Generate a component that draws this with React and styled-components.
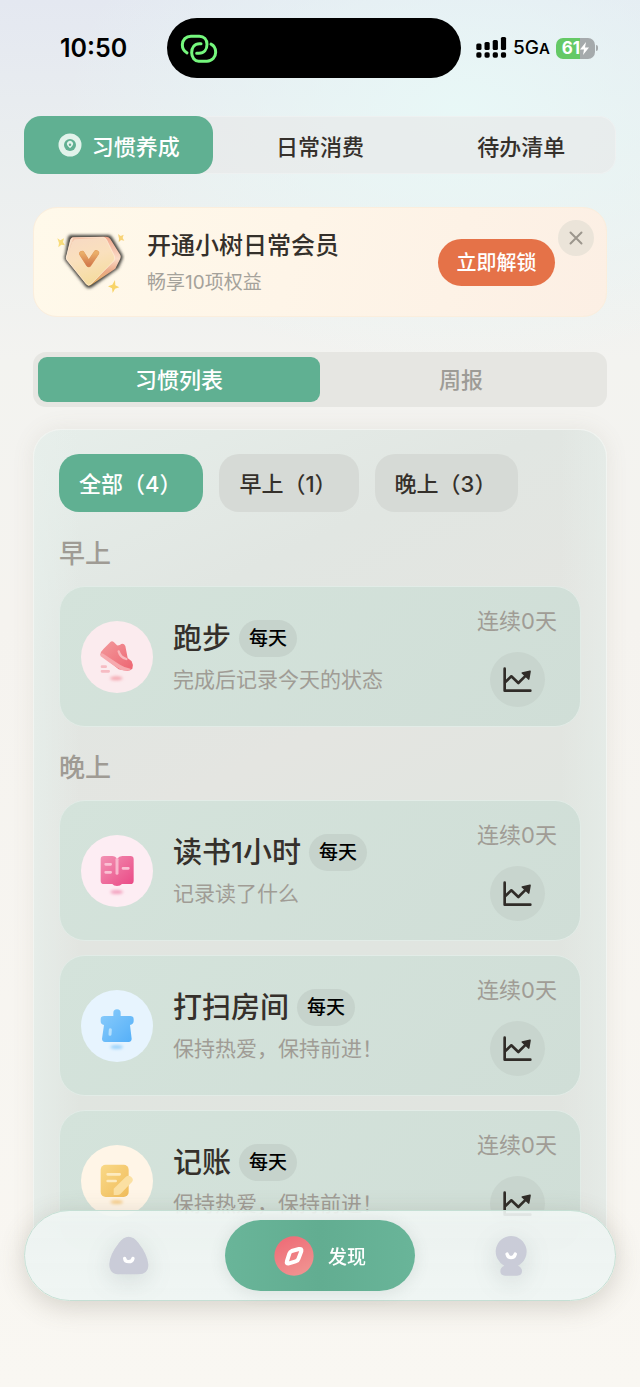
import React, { useState } from 'react';
import styled, { createGlobalStyle, css } from 'styled-components';

const GlobalStyle = createGlobalStyle`
  * {
    box-sizing: border-box;
  }

  body {
    margin: 0;
    font-family: Inter, "Noto Sans CJK SC", sans-serif;
    color: #35302b;
  }

  button {
    margin: 0;
    padding: 0;
    border: 0;
    background: none;
    color: inherit;
    font: inherit;
    cursor: pointer;
  }

  h2, h3, p {
    margin: 0;
    font-weight: 500;
  }

  svg {
    display: block;
    flex: none;
  }
`;

const Screen = styled.div`
  display: flex;
  flex-direction: column;
  height: 100vh;
  padding-bottom: 130px;
  background:
    radial-gradient(ellipse 400px 260px at 72% 110px, rgba(232, 248, 247, 0.95), rgba(232, 248, 247, 0)),
    linear-gradient(180deg, #e4e8f1 0, #eaeeef 150px, #f3f3f0 360px, #f5f3ef 620px, #f9f7f2 100%);
`;

const StatusBar = styled.header`
  display: grid;
  grid-template-columns: 1fr 294px 1fr;
  align-items: center;
  padding: 18px 12px 0 0;
  color: #000;
`;

const Time = styled.time`
  padding-left: 20px;
  text-align: center;
  font-size: 25px;
  font-weight: 600;
  line-height: 30px;
`;

const Island = styled.div`
  display: flex;
  align-items: center;
  height: 60px;
  padding-left: 12px;
  border-radius: 30px;
  background: #000;
`;

const Signals = styled.div`
  display: flex;
  align-items: center;
  gap: 6px;
  padding-left: 15px;
`;

const Network = styled.span`
  font-size: 19px;
  font-weight: 500;
  line-height: 24px;

  small {
    font-size: 15px;
    font-weight: 600;
  }
`;

const Battery = styled.span`
  display: flex;
  align-items: center;
  justify-content: center;
  width: 39px;
  height: 21px;
  border-radius: 7px;
  background: linear-gradient(90deg, #65c966 62%, #a5aaac 62%);
  color: #fff;
  font-size: 17px;
  font-weight: 700;
  line-height: 21px;
`;

const BatteryTip = styled.span`
  width: 2px;
  height: 6px;
  margin-left: -5px;
  border-radius: 0 2px 2px 0;
  background: #a5aaac;
`;

const TopTabs = styled.nav`
  display: grid;
  grid-template-columns: repeat(3, 1fr);
  gap: 12px;
  margin: 38px 24px 0;
  border-radius: 17px;
  background: rgba(232, 232, 232, 0.6);
  box-shadow: inset 0 0 0 1px rgba(255, 255, 255, 0.25);
`;

const TopTab = styled.button`
  display: flex;
  align-items: center;
  justify-content: center;
  gap: 10px;
  height: 58px;
  border-radius: 17px;
  font-size: 22px;
  font-weight: 500;

  ${({ $active }) => $active && css`
    background: #60b092;
    color: #fff;
  `}
`;

const Banner = styled.section`
  position: relative;
  display: flex;
  align-items: center;
  height: 110px;
  margin: 33px 33px 0;
  padding: 0 51px 0 21px;
  border: 1px solid #fbeedd;
  border-radius: 24px;
  background: linear-gradient(105deg, #fff9ea, #fef5e8 45%, #fcefe4);
`;

const BannerText = styled.div`
  flex: 1;
  padding-top: 2px;
  padding-left: 22px;

  h2 {
    font-size: 24px;
    line-height: 36px;
  }

  p {
    margin-top: 4px;
    color: #a5a29b;
    font-size: 19px;
    font-weight: 400;
    line-height: 30px;
  }
`;

const UnlockButton = styled.button`
  width: 117px;
  height: 47px;
  padding-bottom: 2px;
  border-radius: 24px;
  background: #e57248;
  color: #fff;
  font-size: 20px;
  font-weight: 500;
`;

const CloseButton = styled.button`
  position: absolute;
  top: 12px;
  right: 12px;
  display: grid;
  place-items: center;
  width: 36px;
  height: 36px;
  border-radius: 50%;
  background: #ebe4d9;
`;

const Segment = styled.div`
  display: grid;
  grid-template-columns: 1fr 1fr;
  margin: 35px 33px 0;
  padding: 5px;
  border-radius: 13px;
  background: #e6e6e2;
`;

const SegmentButton = styled.button`
  height: 45px;
  padding-bottom: 3px;
  border-radius: 9px;
  background: ${({ $active }) => ($active ? '#60b092' : 'transparent')};
  color: ${({ $active }) => ($active ? '#fff' : '#9d9b96')};
  font-size: 22px;
  font-weight: 500;
`;

const Panel = styled.main`
  flex: 1;
  min-height: 0;
  margin: 22px 33px 0;
  padding: 24px 25px;
  overflow-y: auto;
  scrollbar-width: none;
  border: 1px solid #f1f4f1;
  border-bottom: 0;
  border-radius: 28px 28px 0 0;
  background:
    linear-gradient(90deg, rgba(231, 239, 235, 0.8), transparent 8%, transparent 92%, rgba(231, 239, 235, 0.6)),
    linear-gradient(155deg, #e6eeea, #e1e6e2 22%, #e4e5e1 40%, #e0e5e0 60%, #e2e4e0);
  box-shadow: 0 0 22px rgba(120, 105, 85, 0.1);
`;

const Filters = styled.div`
  display: flex;
  gap: 16px;
  margin-bottom: 25px;
`;

const Chip = styled.button`
  height: 58px;
  padding: 0 22px 3px 20px;
  border-radius: 20px;
  background: ${({ $active }) => ($active ? '#60b092' : '#d6dad6')};
  color: ${({ $active }) => ($active ? '#fff' : '#35302b')};
  font-size: 22px;
  font-weight: 500;
  white-space: nowrap;
`;

const Group = styled.section`
  margin-bottom: 24px;
`;

const GroupTitle = styled.h2`
  margin-bottom: 15px;
  color: #9f9b94;
  font-size: 26px;
  line-height: 34px;
`;

const Cards = styled.div`
  display: grid;
  gap: 14px;
`;

const Card = styled.article`
  display: flex;
  align-items: center;
  padding: 19px 23px 19px 21px;
  border: 1px solid #e2ece7;
  border-radius: 26px;
  background: linear-gradient(135deg, #d4e3db, #d0ded7);
`;

const HabitIcon = styled.div`
  display: grid;
  place-items: center;
  width: 72px;
  height: 72px;
  border-radius: 50%;
  background: ${({ $color }) => $color};
`;

const HabitText = styled.div`
  flex: 1;
  padding-top: 1px;
  padding-left: 20px;

  p {
    margin-top: 7px;
    color: #a09c95;
    font-size: 21px;
    line-height: 30px;
    font-weight: 400;
  }
`;

const HabitName = styled.div`
  display: flex;
  align-items: center;
  gap: 8px;

  h3 {
    font-size: 29px;
    line-height: 38px;
  }
`;

const Tag = styled.span`
  padding: 0 10px;
  border-radius: 19px;
  background: #c6d3cc;
  color: #000;
  font-size: 19px;
  font-weight: 500;
  line-height: 37px;
`;

const HabitStats = styled.div`
  display: flex;
  flex-direction: column;
  align-items: center;
  gap: 16px;
  color: #a09c95;
  font-size: 22px;
  line-height: 30px;
`;

const ChartButton = styled.button`
  display: grid;
  place-items: center;
  width: 55px;
  height: 55px;
  border-radius: 50%;
  background: #c8d5ce;
`;

const BottomNav = styled.nav`
  position: fixed;
  right: 24px;
  bottom: 86px;
  left: 24px;
  display: grid;
  grid-template-columns: repeat(3, 1fr);
  padding: 9px;
  border: 1px solid #c5dfd4;
  border-radius: 46px;
  background: linear-gradient(180deg, rgba(241, 247, 245, 0.9), rgba(237, 243, 241, 0.97) 16%, rgba(239, 245, 243, 0.98));
  box-shadow: 0 6px 26px rgba(100, 90, 75, 0.24);
`;

const NavButton = styled.button`
  display: flex;
  align-items: center;
  justify-content: center;
  gap: 14px;
  height: 71px;
  border-radius: 36px;
  color: #fff;
  font-size: 19px;
  font-weight: 500;

  ${({ $active }) => ($active ? css`
    background: linear-gradient(90deg, #69b599, #62ad91 50%, #69b599);
    box-shadow: 0 2px 16px rgba(80, 100, 95, 0.14);
  ` : css`
    svg {
      filter: drop-shadow(0 6px 12px rgba(70, 90, 90, 0.16));
    }
  `)}
`;

const LinkIcon = () => (
  <svg width="40" height="33" viewBox="538 95 120 98" fill="none" stroke="#75f77d" strokeWidth="9" strokeLinecap="round">
    <path d="M562 157C552 152 548 144 548 133C548 118 559 107 574 107H599C613 107 622 117 622 131C622 147 613 158 598 158H591" />
    <path d="M634 131C644 136 648 144 648 155C648 170 637 182 622 182H597C585 182 576 171 576 157C576 141 585 130 599 130H604" />
  </svg>
);

const SignalIcon = () => (
  <svg width="31" height="22" viewBox="0 0 31 22">
    {[6.5, 5, 3, 0].map((top, i) => (
      <g key={top}>
        <rect x={i * 8.2 + 0.3} y={top} width="5.2" height={13 - top} rx="1.5" />
        <rect x={i * 8.2 + 0.3} y="15.3" width="5.2" height="5.4" rx="1.7" />
      </g>
    ))}
  </svg>
);

const BoltIcon = () => (
  <svg width="9" height="13" viewBox="0 0 9 13" fill="#fff">
    <path d="M6 0L0 7.5H4L3 13L9 5.5H5Z" />
  </svg>
);

const TargetIcon = () => (
  <svg width="24" height="24" viewBox="0 0 24 24">
    <circle cx="12" cy="12" r="11.5" fill="#e2f3eb" />
    <circle cx="12" cy="12" r="6" fill="#60b092" />
    <path d="M12 15.2L9.8 13A3 3 0 1 1 14.2 13Z" fill="#e2f3eb" />
    <circle cx="12" cy="11.7" r="1.2" fill="#60b092" />
  </svg>
);

const DiamondIcon = () => (
  <svg width="70" height="65" viewBox="105 90 210 195">
    <defs>
      <linearGradient id="gem" x1="0" y1="0" x2="0.3" y2="1">
        <stop offset="0" stopColor="#f7d9c4" />
        <stop offset="0.5" stopColor="#fae0bd" />
        <stop offset="1" stopColor="#f5dca0" />
      </linearGradient>
      <linearGradient id="gemSide" x1="0" y1="0" x2="0" y2="1">
        <stop offset="0" stopColor="#f0a68b" />
        <stop offset="0.45" stopColor="#fbdcc8" />
        <stop offset="0.7" stopColor="#eba987" />
        <stop offset="1" stopColor="#e3b45f" />
      </linearGradient>
      <linearGradient id="gemMark" x1="0" y1="0" x2="0" y2="1">
        <stop offset="0" stopColor="#eaae69" />
        <stop offset="1" stopColor="#d37c4e" />
      </linearGradient>
      <filter id="gemShadow" x="-20%" y="-20%" width="140%" height="140%">
        <feGaussianBlur stdDeviation="5" />
      </filter>
    </defs>
    <path d="M152 105H266Q274 106 279 116L307 164Q311 172 305 182L295 205L217 261Q206 268 198 261L135 181Q131 172 135 164L143 116Q145 106 152 105Z" fill="#45433d" filter="url(#gemShadow)" />
    <path d="M158 112L258 110Q266 110 271 117L301 165Q304 172 299 180L286 206L213 255Q205 260 199 253L140 180Q136 173 140 165L151 119Q153 113 158 112Z" fill="url(#gemSide)" />
    <path d="M158 114L250 112Q256 113 260 120L283 168Q285 175 282 182L212 253Q205 259 199 252L141 180Q137 173 141 165L152 120Q154 115 158 114Z" fill="url(#gem)" stroke="#fff0dc" strokeWidth="2" />
    <path d="M160 114L144 163L154 129L164 118L250 113Z" fill="#efaa87" opacity="0.5" />
    <path d="M186 161L206 193L229 159" fill="none" stroke="#df9559" strokeWidth="17" strokeLinecap="round" strokeLinejoin="round" />
    <path d="M186 161L206 193L229 159" fill="none" stroke="url(#gemMark)" strokeWidth="15" strokeLinecap="round" strokeLinejoin="round" />
    <path d="M112 115L121 121L132 115L129 126L135 136L124 134L115 142L117 129Z" fill="#f8dc7b" />
    <path d="M294 102L302 108L311 104L308 114L313 122L303 120L296 127L297 116Z" fill="#f8d377" />
    <path d="M285 240L286 256L298 262L285 266L278 279L276 265L264 259L277 254Z" fill="#f8d467" />
  </svg>
);

const CloseIcon = () => (
  <svg width="14" height="14" viewBox="0 0 14 14" stroke="#9c968d" strokeWidth="2" strokeLinecap="round">
    <path d="M1.5 1.5L12.5 12.5M12.5 1.5L1.5 12.5" />
  </svg>
);

const ChartIcon = () => (
  <svg width="32" height="28" viewBox="182 258 96 84" fill="none" stroke="#302c28" strokeWidth="8" strokeLinecap="round" strokeLinejoin="round">
    <path d="M193 266V332H270" />
    <path d="M195 306L213 289L234 309L257 286" />
    <path d="M269 274L246 279L265 297Z" fill="#302c28" strokeWidth="5" />
  </svg>
);

const IconShadow = ({ x, y, color }) => (
  <>
    <filter id={`blur-${x}-${y}`} x="-50%" y="-100%" width="200%" height="300%">
      <feGaussianBlur stdDeviation="4" />
    </filter>
    <ellipse cx={x} cy={y} rx="19" ry="6" fill={color} filter={`url(#blur-${x}-${y})`} />
  </>
);

const ShoeIcon = () => (
  <svg width="72" height="72" viewBox="95 120 216 216">
    <defs>
      <linearGradient id="shoe" x1="0" y1="0" x2="1" y2="1">
        <stop offset="0" stopColor="#f39a9c" />
        <stop offset="1" stopColor="#ed6471" />
      </linearGradient>
    </defs>
    <path d="M153 221Q154 211 163 203L184 182Q189 179 194 184L203 193Q211 194 216 189Q224 187 228 195L235 231L247 241Q253 251 249 263Q241 272 223 268L208 265Z" fill="url(#shoe)" />
    <path d="M154 218Q158 215 163 219L212 251Q226 260 246 264Q238 272 220 268Q207 265 153 225Z" fill="#f6a9ae" />
    <path d="M208 211Q213 229 231 234" fill="none" stroke="#f8b9bd" strokeWidth="7" strokeLinecap="round" />
    <path d="M158 257H169M158 271H178" stroke="#f6bcc3" strokeWidth="8" strokeLinecap="round" />
    <IconShadow x={201} y={292} color="#f4a7b0" />
  </svg>
);

const BookIcon = () => (
  <svg width="72" height="72" viewBox="64 105 216 216">
    <defs>
      <linearGradient id="book" x1="0" y1="0" x2="1" y2="1">
        <stop offset="0" stopColor="#f292b3" />
        <stop offset="1" stopColor="#ea4885" />
      </linearGradient>
    </defs>
    <path d="M133 168H157Q168 168 172 177Q178 168 188 168H212Q222 168 222 178V242Q222 252 212 252H187Q182 258 172 258Q162 258 158 252H133Q123 252 123 242V178Q123 168 133 168Z" fill="url(#book)" />
    <path d="M172 178V220" stroke="#f8b6cc" strokeWidth="9" strokeLinecap="round" />
    <path d="M138 193H153M138 217H153M190 205H206" stroke="#fac1d4" strokeWidth="8" strokeLinecap="round" />
    <IconShadow x={171} y={276} color="#f3a0be" />
  </svg>
);

const BroomIcon = () => (
  <svg width="72" height="72" viewBox="64 570 216 216">
    <defs>
      <linearGradient id="broom" x1="0" y1="0" x2="1" y2="1">
        <stop offset="0" stopColor="#8accfb" />
        <stop offset="1" stopColor="#54aff8" />
      </linearGradient>
    </defs>
    <path d="M161 648V639Q161 628 172 628Q183 628 183 639V648H212Q222 648 222 658V664Q221 674 211 675L216 716Q216 725 207 726H136Q127 725 127 716L133 675Q123 674 123 664V658Q123 648 133 648Z" fill="url(#broom)" />
    <path d="M152 689L151 703" stroke="#b5e0fd" strokeWidth="9" strokeLinecap="round" />
    <IconShadow x={171} y={741} color="#9bd3fb" />
  </svg>
);

const NoteIcon = () => (
  <svg width="72" height="72" viewBox="94 135 216 216">
    <defs>
      <linearGradient id="note" x1="0" y1="0" x2="1" y2="1">
        <stop offset="0" stopColor="#f9d988" />
        <stop offset="1" stopColor="#f1bd5c" />
      </linearGradient>
    </defs>
    <rect x="153" y="194" width="84" height="97" rx="15" fill="url(#note)" />
    <path d="M174 223H210M174 243H198" stroke="#fdebc0" strokeWidth="8" strokeLinecap="round" />
    <path d="M192 266L228 231Q236 224 245 231Q253 238 247 246L213 281Q209 285 203 285H192Z" fill="#fbe0a2" />
    <IconShadow x={201} y={306} color="#f7cf8c" />
  </svg>
);

const HomeIcon = () => (
  <svg width="42" height="42" viewBox="296 104 126 126">
    <path d="M358 109Q374 109 387 127Q415 163 417 192Q418 222 386 222H331Q299 222 300 190Q301 163 329 127Q342 109 358 109Z" fill="#caccd8" />
    <path d="M346 174Q347 184 358 184Q369 184 371 174" fill="none" stroke="#fff" strokeWidth="10" strokeLinecap="round" />
  </svg>
);

const CompassIcon = () => (
  <svg width="40" height="40" viewBox="797 106 120 120">
    <defs>
      <linearGradient id="compass" x1="0" y1="0" x2="0.5" y2="1">
        <stop offset="0" stopColor="#ee6874" />
        <stop offset="1" stopColor="#f0908f" />
      </linearGradient>
    </defs>
    <circle cx="857" cy="166" r="59" fill="url(#compass)" />
    <path d="M850 151L872 145Q881 143 879 152L871 173Q869 180 862 182L842 188Q833 190 836 181L843 159Q845 153 850 151Z" fill="none" stroke="#fff" strokeWidth="12" strokeLinejoin="round" />
  </svg>
);

const ProfileIcon = () => (
  <svg width="40" height="46" viewBox="511 127 120 138">
    <path d="M571 136A47 47 0 0 1 592 225Q604 230 604 241Q604 255 589 255H553Q539 255 539 241Q539 230 551 225A47 47 0 0 1 571 136Z" fill="#caccd8" />
    <path d="M559 190Q562 201 571 201Q581 201 584 190" fill="none" stroke="#fff" strokeWidth="10" strokeLinecap="round" />
  </svg>
);

const groups = [
  {
    title: '早上',
    habits: [
      { name: '跑步', note: '完成后记录今天的状态', color: '#fbebee', Icon: ShoeIcon },
    ],
  },
  {
    title: '晚上',
    habits: [
      { name: '读书1小时', note: '记录读了什么', color: '#fdedf3', Icon: BookIcon },
      { name: '打扫房间', note: '保持热爱，保持前进！', color: '#e7f4fe', Icon: BroomIcon },
      { name: '记账', note: '保持热爱，保持前进！', color: '#fff5e7', Icon: NoteIcon },
    ],
  },
];

const HabitCard = ({ habit }) => {
  const { name, note, color, Icon } = habit;

  return (
    <Card>
      <HabitIcon $color={color}><Icon /></HabitIcon>
      <HabitText>
        <HabitName>
          <h3>{name}</h3>
          <Tag>每天</Tag>
        </HabitName>
        <p>{note}</p>
      </HabitText>
      <HabitStats>
        <span>连续0天</span>
        <ChartButton aria-label={`${name}统计`}><ChartIcon /></ChartButton>
      </HabitStats>
    </Card>
  );
};

const App = () => {
  const [tab, setTab] = useState('习惯养成');
  const [view, setView] = useState('习惯列表');
  const [filter, setFilter] = useState('全部');
  const [showBanner, setShowBanner] = useState(true);

  const total = groups.reduce((sum, group) => sum + group.habits.length, 0);
  const filters = [
    { name: '全部', count: total },
    ...groups.map(group => ({ name: group.title, count: group.habits.length })),
  ];
  const visibleGroups = groups.filter(group => filter === '全部' || group.title === filter);

  return (
    <Screen>
      <GlobalStyle />
      <StatusBar>
        <Time>10:50</Time>
        <Island><LinkIcon /></Island>
        <Signals>
          <SignalIcon />
          <Network>5G<small>A</small></Network>
          <Battery>61<BoltIcon /></Battery>
          <BatteryTip />
        </Signals>
      </StatusBar>

      <TopTabs>
        {['习惯养成', '日常消费', '待办清单'].map(name => (
          <TopTab key={name} $active={tab === name} onClick={() => setTab(name)}>
            {tab === name && <TargetIcon />}
            {name}
          </TopTab>
        ))}
      </TopTabs>

      {showBanner && (
        <Banner>
          <DiamondIcon />
          <BannerText>
            <h2>开通小树日常会员</h2>
            <p>畅享10项权益</p>
          </BannerText>
          <UnlockButton>立即解锁</UnlockButton>
          <CloseButton aria-label="关闭" onClick={() => setShowBanner(false)}>
            <CloseIcon />
          </CloseButton>
        </Banner>
      )}

      <Segment>
        {['习惯列表', '周报'].map(name => (
          <SegmentButton key={name} $active={view === name} onClick={() => setView(name)}>
            {name}
          </SegmentButton>
        ))}
      </Segment>

      <Panel>
        <Filters>
          {filters.map(({ name, count }) => (
            <Chip key={name} $active={filter === name} onClick={() => setFilter(name)}>
              {`${name}（${count}）`}
            </Chip>
          ))}
        </Filters>
        {visibleGroups.map(group => (
          <Group key={group.title}>
            <GroupTitle>{group.title}</GroupTitle>
            <Cards>
              {group.habits.map(habit => <HabitCard key={habit.name} habit={habit} />)}
            </Cards>
          </Group>
        ))}
      </Panel>

      <BottomNav>
        <NavButton aria-label="首页"><HomeIcon /></NavButton>
        <NavButton $active><CompassIcon />发现</NavButton>
        <NavButton aria-label="我的"><ProfileIcon /></NavButton>
      </BottomNav>
    </Screen>
  );
};

export default App;
